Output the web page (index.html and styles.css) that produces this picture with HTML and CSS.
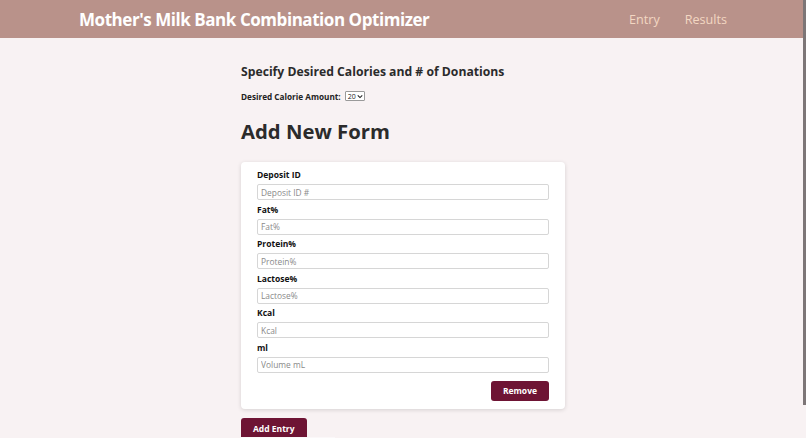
FILE: index.html
```html
<!DOCTYPE html>
<html>
<head>
<meta charset="utf-8">
<link rel="stylesheet" href="styles.css">
</head>
<body>
<header class="topbar">
  <div class="brand">Mother's Milk Bank Combination Optimizer</div>
  <nav class="nav">
    <a class="nav-link">Entry</a>
    <a class="nav-link">Results</a>
  </nav>
</header>
<main class="content">
  <h2 class="section-title">Specify Desired Calories and # of Donations</h2>
  <div class="calorie-row">
    <label class="calorie-label">Desired Calorie Amount:</label>
    <span class="select-box">20<svg class="chev" viewBox="0 0 8 6" width="6" height="5"><path d="M1 1.5 L4 4.5 L7 1.5" fill="none" stroke="#222" stroke-width="1.4"/></svg></span>
  </div>
  <h1 class="form-title">Add New Form</h1>
  <section class="card">
    <div class="field">
      <label class="field-label">Deposit ID</label>
      <input class="field-input" placeholder="Deposit ID #">
    </div>
    <div class="field">
      <label class="field-label">Fat%</label>
      <input class="field-input" placeholder="Fat%">
    </div>
    <div class="field">
      <label class="field-label">Protein%</label>
      <input class="field-input" placeholder="Protein%">
    </div>
    <div class="field">
      <label class="field-label">Lactose%</label>
      <input class="field-input" placeholder="Lactose%">
    </div>
    <div class="field">
      <label class="field-label">Kcal</label>
      <input class="field-input" placeholder="Kcal">
    </div>
    <div class="field">
      <label class="field-label">ml</label>
      <input class="field-input" placeholder="Volume mL">
    </div>
    <div class="card-actions">
      <button class="btn">Remove</button>
    </div>
  </section>
  <button class="btn btn-add">Add Entry</button>
  <div class="next-edge"></div>
</main>
<div class="scrollbar"></div>
</body>
</html>
```
FILE: styles.css
```css
* { box-sizing: border-box; }
html, body { margin: 0; padding: 0; }
body {
  background: #f8f2f3;
  font-family: "Open Sans", "Noto Sans", sans-serif;
  color: #2b2b2b;
  overflow: hidden;
  height: 438px;
}
.topbar {
  height: 38px;
  background: #b9928a;
  display: flex;
  align-items: center;
  justify-content: space-between;
  padding: 0 79px 0 79px;
}
.brand {
  color: #ffffff;
  font-weight: 700;
  font-size: 17px;
  letter-spacing: -0.45px;
}
.nav {
  display: flex;
  gap: 25px;
}
.nav-link {
  color: #f3d7c2;
  font-size: 12.6px;
}
.content {
  width: 324px;
  margin: 0 auto;
  display: flex;
  flex-direction: column;
  align-items: flex-start;
}
.section-title {
  margin: 25px 0 0 0;
  font-size: 12.2px;
  font-weight: 700;
  line-height: 17px;
  color: #2b2b2b;
}
.calorie-row {
  margin-top: 10px;
  display: flex;
  align-items: center;
  gap: 4px;
  height: 12px;
}
.calorie-label {
  font-size: 8.2px;
  font-weight: 700;
  color: #222;
}
.select-box {
  display: inline-flex;
  align-items: center;
  gap: 1px;
  height: 10px;
  padding: 0 1px 0 2px;
  border: 1px solid #9a9a9a;
  background: #fff;
  font-size: 7px;
  color: #222;
  border-radius: 1px;
}
.form-title {
  margin: 15px 0 0 0;
  font-size: 20.3px;
  font-weight: 700;
  line-height: 28px;
  color: #2b2b2b;
}
.card {
  margin-top: 17px;
  width: 324px;
  background: #ffffff;
  border-radius: 4px;
  box-shadow: 0 1px 4px rgba(0,0,0,0.14);
  padding: 6px 16px 8px 16px;
  display: flex;
  flex-direction: column;
}
.field {
  display: flex;
  flex-direction: column;
  gap: 2px;
  margin-bottom: 2.6px;
}
.field-label {
  font-size: 8.5px;
  font-weight: 700;
  color: #111;
  line-height: 14px;
  height: 14px;
}
.field-input {
  width: 100%;
  height: 16px;
  border: 1px solid #d6d6d6;
  border-radius: 2px;
  padding: 0 3px;
  font-family: "Open Sans", sans-serif;
  font-size: 8.4px;
  background: #fff;
  outline: none;
}
.field-input::placeholder { color: #8a8a8a; }
.card-actions {
  display: flex;
  justify-content: flex-end;
  margin-top: 5.4px;
}
.btn {
  background: #6e1434;
  color: #fff;
  border: none;
  border-radius: 3px;
  font-family: "Open Sans", sans-serif;
  font-weight: 700;
  font-size: 8.5px;
  height: 20px;
  padding: 0 12px;
}
.btn-add {
  margin-top: 9px;
  height: 22px;
  padding: 0 12px;
}
.next-edge {
  margin-top: -3px;
  width: 94px;
  height: 4px;
  background: #fbf8f9;
}
.scrollbar {
  position: absolute;
  top: 0;
  right: 0;
  width: 3px;
  height: 405px;
  background: #7d7677;
}
```
